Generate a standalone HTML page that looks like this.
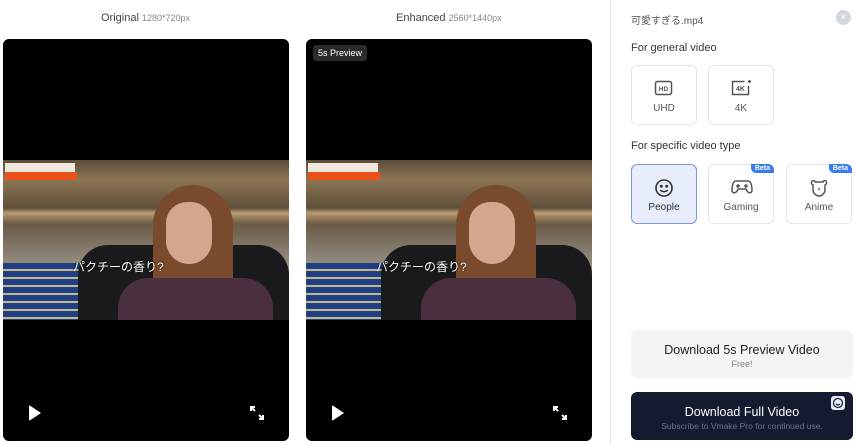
<!DOCTYPE html>
<html><head><meta charset="utf-8"><style>
*{margin:0;padding:0;box-sizing:border-box}
body{width:855px;height:445px;background:#fff;font-family:"Liberation Sans","Noto Sans CJK JP",sans-serif;position:relative;overflow:hidden;color:#333}
.lbl{position:absolute;top:12px;font-size:11px;color:#444}
.lbl small{font-size:9px;color:#888}
.panel{position:absolute;top:39px;width:286px;height:402px;background:#000;border-radius:6px;overflow:hidden}
.scene{position:absolute;left:0;top:121px;width:286px;height:160px;overflow:hidden;
background:linear-gradient(180deg,#5a4a38 0%,#8c7654 12%,#5f4e3a 30%,#b79c74 33%,#6b5a46 40%,#8a8378 60%,#bda47a 76%,#5b4a38 80%)}
.stripes{position:absolute;left:0;top:103px;width:90px;height:57px;background:repeating-linear-gradient(180deg,#1e3f86 0 6px,#c9b889 6px 8px)}
.chair{position:absolute;left:75px;top:85px;width:211px;height:75px;background:#1a1a1c;border-radius:30px 30px 0 0}
.hair{position:absolute;left:150px;top:25px;width:80px;height:135px;background:#7a4a2c;border-radius:40px 40px 10px 10px}
.face{position:absolute;left:163px;top:42px;width:46px;height:62px;background:#d6a58e;border-radius:22px 22px 24px 24px}
.shirt{position:absolute;left:115px;top:118px;width:155px;height:42px;background:#4b2f3f;border-radius:30px 30px 0 0}
.sub{position:absolute;left:70px;top:98px;color:#fff;font-size:12px;text-shadow:0 0 2px #000}
.tag{position:absolute;left:2px;top:3px;width:70px;height:16px;background:#f0e8dc}
.tag2{position:absolute;left:2px;top:12px;width:72px;height:8px;background:#e8521a}
.play{position:absolute;left:26px;bottom:20px;width:0;height:0;border-left:12px solid #fff;border-top:8px solid transparent;border-bottom:8px solid transparent;border-radius:2px}
.full{position:absolute;right:24px;bottom:20px;width:16px;height:16px}
.side{position:absolute;left:610px;top:0;width:1px;height:445px;background:#e6e6e6}
.h{position:absolute;left:631px;font-size:11px;color:#333}
.card{position:absolute;width:66px;height:60px;border:1px solid #e6e6e6;border-radius:6px;background:#fff;text-align:center;font-size:10px;color:#555}
.card .t{position:absolute;left:0;right:0;bottom:10px}
.card svg{position:absolute;left:22px;top:13px}
.beta{position:absolute;right:-1px;top:-1px;background:#3a7bf0;color:#fff;font-size:7px;font-weight:bold;padding:1px 4px;border-radius:0 6px 0 5px}
.btn{position:absolute;left:631px;width:222px;border-radius:6px;text-align:center}
</style></head><body>
<div class="lbl" style="left:101px">Original <small>1280*720px</small></div>
<div class="lbl" style="left:396px">Enhanced <small>2560*1440px</small></div>

<div class="panel" style="left:3px">
 <div class="scene"><div class="stripes"></div><div class="chair"></div><div class="hair"></div><div class="shirt"></div><div class="face"></div><div class="tag"></div><div class="tag2"></div><div class="sub">パクチーの香り?</div></div>
 <div class="play"></div>
 <svg class="full" viewBox="0 0 16 16" fill="none" stroke="#fff" stroke-width="2"><path d="M2 6V2h4M2 2l4 4M14 10v4h-4M14 14l-4-4"/></svg>
</div>
<div class="panel" style="left:306px">
 <div style="position:absolute;left:7px;top:6px;background:#2a2a2a;color:#fff;font-size:9px;padding:3px 5px;border-radius:3px">5s Preview</div>
 <div class="scene"><div class="stripes"></div><div class="chair"></div><div class="hair"></div><div class="shirt"></div><div class="face"></div><div class="tag"></div><div class="tag2"></div><div class="sub">パクチーの香り?</div></div>
 <div class="play"></div>
 <svg class="full" viewBox="0 0 16 16" fill="none" stroke="#fff" stroke-width="2"><path d="M2 6V2h4M2 2l4 4M14 10v4h-4M14 14l-4-4"/></svg>
</div>

<div class="side"></div>
<div class="h" style="top:12px;font-size:10px;color:#555">可愛すぎる.mp4</div>
<div style="position:absolute;left:836px;top:10px;width:15px;height:15px;border-radius:50%;background:#d3d7de;color:#fff;font-size:10px;line-height:15px;text-align:center">×</div>
<div class="h" style="top:42px">For general video</div>
<div class="card" style="left:631px;top:65px"><svg width="20" height="18" viewBox="0 0 20 18" fill="none" stroke="#555" stroke-width="1.5"><rect x="1.5" y="2.5" width="16" height="13" rx="2"/><text x="9.5" y="12" font-size="6.5" text-anchor="middle" fill="#555" stroke="none" font-weight="bold" font-family="Liberation Sans">HD</text></svg><div class="t">UHD</div></div>
<div class="card" style="left:708px;top:65px"><svg width="22" height="18" viewBox="0 0 22 18" fill="none" stroke="#555" stroke-width="1.5"><path d="M17.5 7v8.5h-16v-13h12"/><path d="M18.5 1v3M17 2.5h3"/><text x="9.5" y="12" font-size="7" text-anchor="middle" fill="#555" stroke="none" font-weight="bold" font-family="Liberation Sans">4K</text></svg><div class="t">4K</div></div>
<div class="h" style="top:140px">For specific video type</div>
<div class="card" style="left:631px;top:164px;background:#e7edfb;border-color:#7e96e0;color:#333"><svg width="20" height="20" viewBox="0 0 20 20" fill="none" stroke="#333" stroke-width="1.6"><circle cx="10" cy="10" r="8"/><circle cx="7.3" cy="8.3" r=".7" fill="#333"/><circle cx="12.7" cy="8.3" r=".7" fill="#333"/><path d="M6.3 12c2 2.2 5.4 2.2 7.4 0"/></svg><div class="t">People</div></div>
<div class="card" style="left:708px;top:164px"><div class="beta">Beta</div><svg width="22" height="18" viewBox="0 0 22 18" fill="none" stroke="#555" stroke-width="1.5"><path d="M5 3h12c3 0 4 5 4 9 0 3-3 4-5 1l-1-2H7l-1 2c-2 3-5 2-5-1 0-4 1-9 4-9z"/><path d="M5 8h4M7 6v4"/><circle cx="15" cy="8" r="1"/></svg><div class="t">Gaming</div></div>
<div class="card" style="left:786px;top:164px"><div class="beta">Beta</div><svg width="20" height="20" viewBox="0 0 20 20" fill="none" stroke="#555" stroke-width="1.5"><path d="M3 3c2-1 3 0 3 1h8c0-1 1-2 3-1 1 1 1 3-1 4v5c0 3-3 6-6 6s-6-3-6-6V7C2 6 2 4 3 3z"/><path d="M10 10v2"/></svg><div class="t">Anime</div></div>

<div class="btn" style="top:330px;height:48px;background:#f4f4f4">
 <div style="font-size:12.5px;color:#222;margin-top:13px">Download 5s Preview Video</div>
 <div style="font-size:9px;color:#888;margin-top:2px">Free!</div>
</div>
<div class="btn" style="top:392px;height:48px;background:#141a30">
 <div style="font-size:12.5px;color:#fff;margin-top:13px">Download Full Video</div>
 <div style="font-size:8.5px;color:#6b7188;margin-top:2px">Subscribe to Vmake Pro for continued use.</div>
 <div style="position:absolute;right:8px;top:4px;width:14px;height:14px;background:#e6e9f4;border-radius:3px"><svg width="14" height="14" viewBox="0 0 14 14" fill="none" stroke="#141a30" stroke-width="1.2"><circle cx="7" cy="7" r="4.5"/><path d="M5 8c1 1.2 3 1.2 4 0"/></svg></div>
</div>
</body></html>
